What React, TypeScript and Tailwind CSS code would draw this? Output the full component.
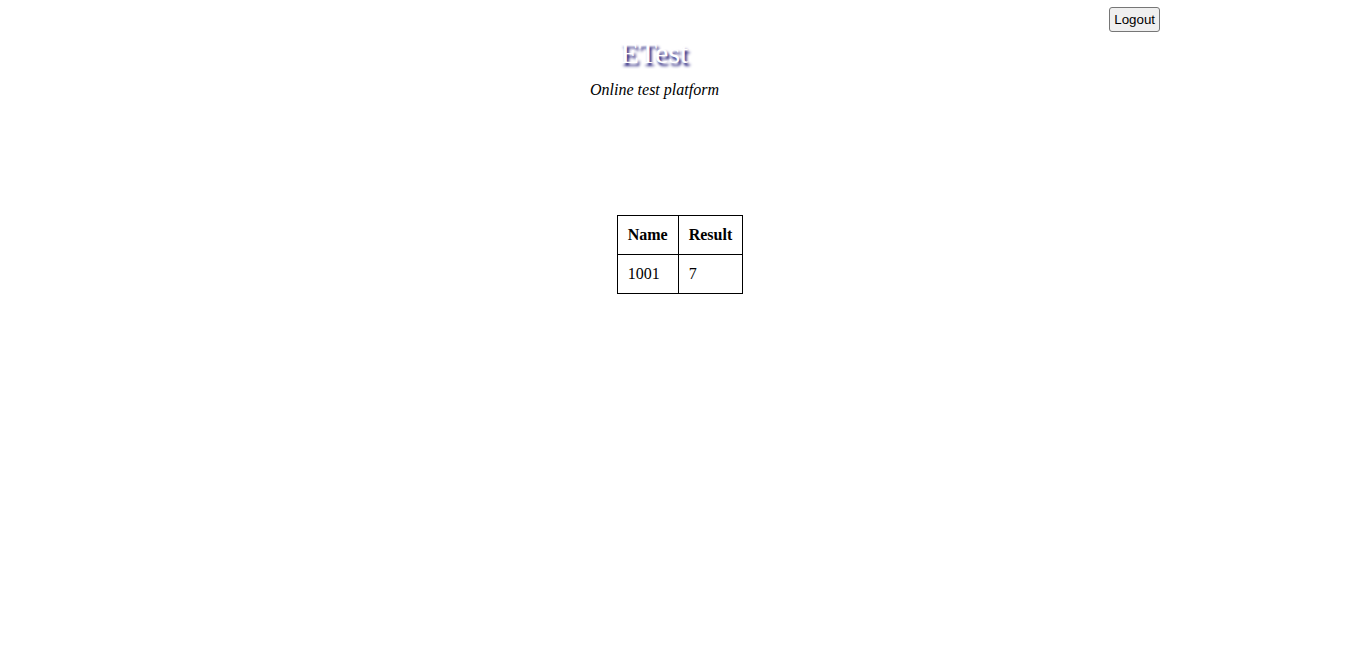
import React from 'react';

const rows = [{ name: '1001', result: '7' }];

export default function App() {
  return (
    <div className="min-h-screen bg-white text-black font-['Liberation_Serif',serif]">
      <div className="flex justify-end pt-[7px] pr-[202px]">
        <button className="h-[25px] px-[4px] border border-[#767676] rounded-[3px] bg-[#efefef] text-[13.33px] leading-none text-black font-['Liberation_Sans',Arial,sans-serif]">
          Logout
        </button>
      </div>
      <div className="w-[1309px] text-center">
        <h1 className="mt-[3px] text-[30px] leading-[36px] text-white [text-shadow:2px_3px_3px_#100a6e]">ETest</h1>
        <p className="mt-[9px] text-[16px] leading-[20px] italic">Online test platform</p>
      </div>
      <div className="flex justify-center pt-[115px] pr-[2px]">
        <table className="border-collapse border border-black text-[16px] text-left">
          <thead>
            <tr>
              <th className="border border-black px-[10px] h-[39px] font-bold">Name</th>
              <th className="border border-black px-[10px] h-[39px] font-bold">Result</th>
            </tr>
          </thead>
          <tbody>
            {rows.map(r => (
              <tr key={r.name}>
                <td className="border border-black px-[10px] h-[39px]">{r.name}</td>
                <td className="border border-black px-[10px] h-[39px]">{r.result}</td>
              </tr>
            ))}
          </tbody>
        </table>
      </div>
    </div>
  );
}
